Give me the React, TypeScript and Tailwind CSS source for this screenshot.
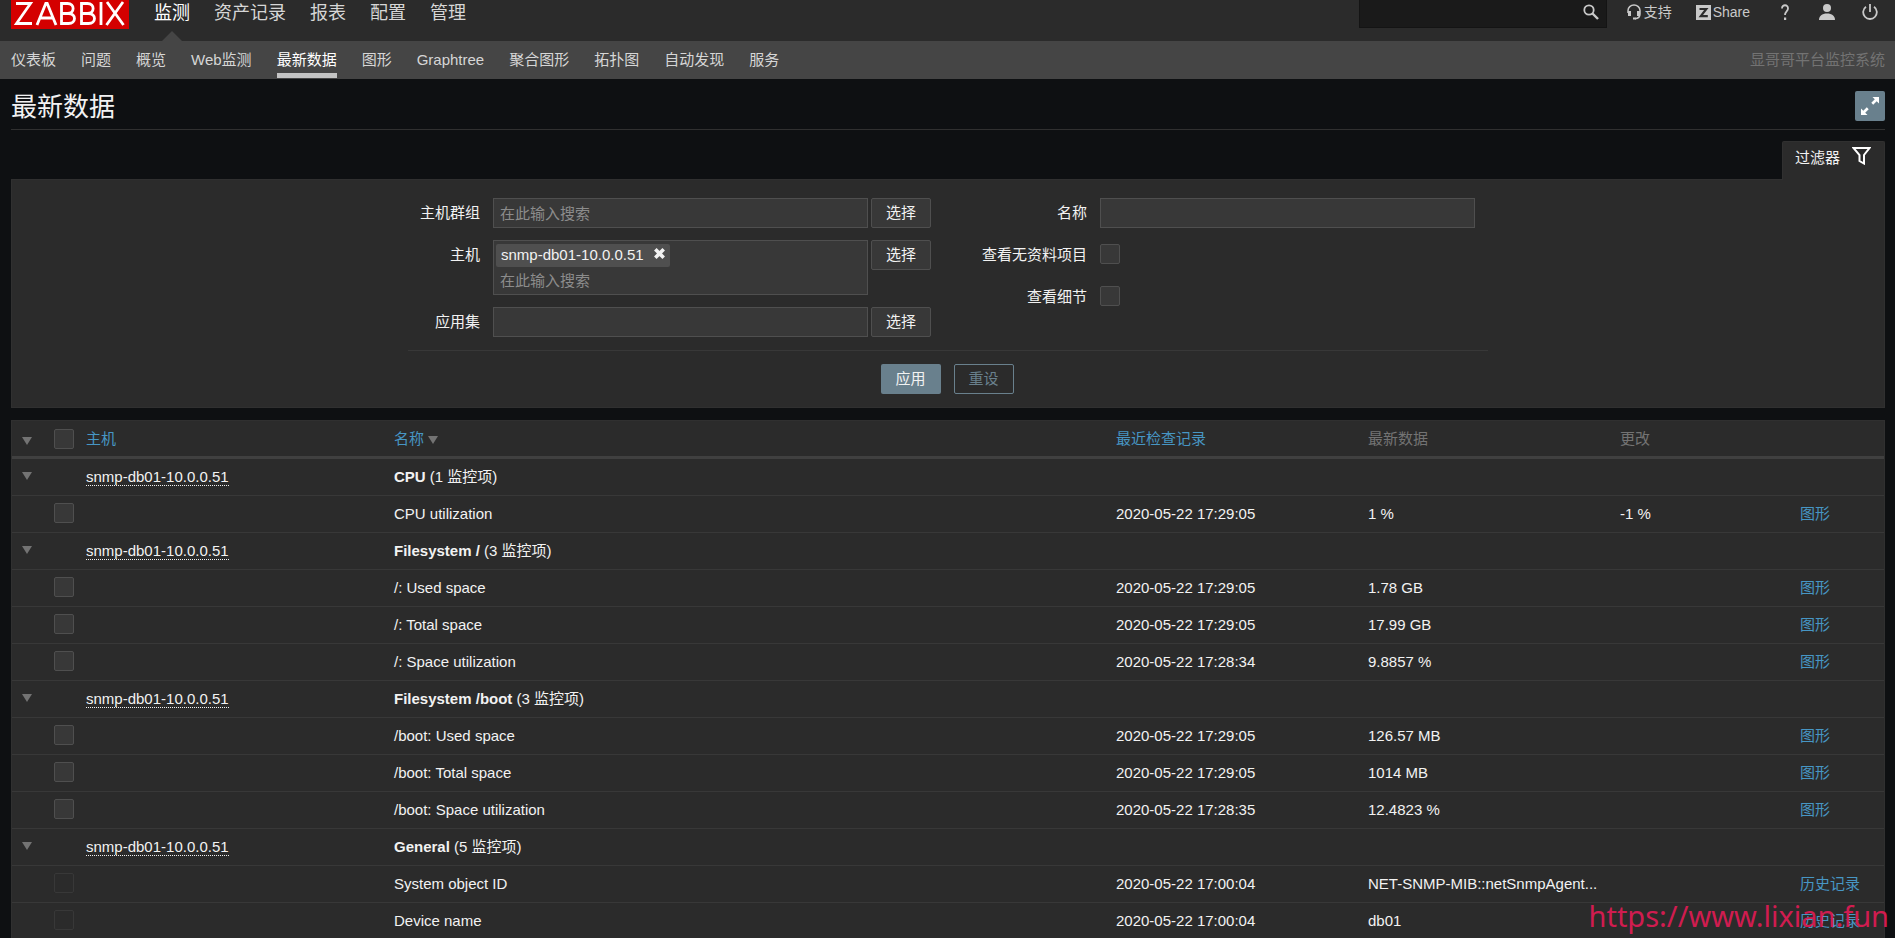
import React from 'react';

const mainMenu = ['监测', '资产记录', '报表', '配置', '管理'];

const subMenu = [
  '仪表板',
  '问题',
  '概览',
  'Web监测',
  '最新数据',
  '图形',
  'Graphtree',
  '聚合图形',
  '拓扑图',
  '自动发现',
  '服务',
];

const HOST = 'snmp-db01-10.0.0.51';

type Item = {
  name: string;
  lastCheck: string;
  value: string;
  change?: string;
  link: string;
  disabled?: boolean;
};

type Group = { name: string; count: number; items: Item[] };

const groups: Group[] = [
  {
    name: 'CPU',
    count: 1,
    items: [
      { name: 'CPU utilization', lastCheck: '2020-05-22 17:29:05', value: '1 %', change: '-1 %', link: '图形' },
    ],
  },
  {
    name: 'Filesystem /',
    count: 3,
    items: [
      { name: '/: Used space', lastCheck: '2020-05-22 17:29:05', value: '1.78 GB', link: '图形' },
      { name: '/: Total space', lastCheck: '2020-05-22 17:29:05', value: '17.99 GB', link: '图形' },
      { name: '/: Space utilization', lastCheck: '2020-05-22 17:28:34', value: '9.8857 %', link: '图形' },
    ],
  },
  {
    name: 'Filesystem /boot',
    count: 3,
    items: [
      { name: '/boot: Used space', lastCheck: '2020-05-22 17:29:05', value: '126.57 MB', link: '图形' },
      { name: '/boot: Total space', lastCheck: '2020-05-22 17:29:05', value: '1014 MB', link: '图形' },
      { name: '/boot: Space utilization', lastCheck: '2020-05-22 17:28:35', value: '12.4823 %', link: '图形' },
    ],
  },
  {
    name: 'General',
    count: 5,
    items: [
      {
        name: 'System object ID',
        lastCheck: '2020-05-22 17:00:04',
        value: 'NET-SNMP-MIB::netSnmpAgent...',
        link: '历史记录',
        disabled: true,
      },
      { name: 'Device name', lastCheck: '2020-05-22 17:00:04', value: 'db01', link: '历史记录', disabled: true },
    ],
  },
];

function Arrow() {
  return (
    <svg width="10" height="8" viewBox="0 0 10 8" className="inline-block fill-[#737373]">
      <path d="M0 0h10L5 8z" />
    </svg>
  );
}

function Checkbox(props: React.InputHTMLAttributes<HTMLInputElement>) {
  return (
    <input
      type="checkbox"
      className="block size-5 appearance-none rounded-xs border border-[#4f4f4f] bg-[#383838] disabled:border-[#383838] disabled:bg-[#2b2b2b]"
      {...props}
    />
  );
}

function SelectButton() {
  return (
    <button type="button" className="h-[30px] w-[60px] shrink-0 rounded-xs border border-[#4f4f4f] bg-[#383838]">
      选择
    </button>
  );
}

function Header() {
  return (
    <header className="flex h-[41px] items-start justify-between bg-[#2b2b2b] pr-2.5 pl-[11px]">
      <div className="flex items-start">
        <a href="#" aria-label="ZABBIX" className="mr-[25px] block h-[29px] w-[118px] overflow-hidden bg-[#d40000]">
          <svg width="118" height="29" viewBox="0 0 118 29" fill="none" stroke="#fff" strokeWidth="2.800">
            <path d="M5 3.500h14.500L5.500 23.500h15.500" />
            <path d="M26 25 34.800 3.500h1.400L45 25M29 18h13" />
            <path d="M50.500 3.500v20h7c8 0 8-10 0-10h-7 6c7.500 0 7.500-10 0-10z" />
            <path d="M70.500 3.500v20h7c8 0 8-10 0-10h-7 6c7.500 0 7.500-10 0-10z" />
            <path d="M90 2v23M96 2l16.500 23M112 2 95.500 25" />
          </svg>
        </a>
        <nav className="flex gap-6 text-lg leading-[26px] text-[#d6d6d6]">
          {mainMenu.map((item, i) => (
            <a key={item} href="#" className={i === 0 ? 'flex h-[41px] flex-col items-center justify-between text-white' : ''}>
              {item}
              {i === 0 && (
                <svg width="20" height="10" viewBox="0 0 20 10" className="fill-[#454545]">
                  <path d="M10 0l10 10H0z" />
                </svg>
              )}
            </a>
          ))}
        </nav>
      </div>

      <div className="flex items-start text-[#c9c9c9]">
        <form className="flex h-7 w-[248px] items-start border border-t-0 border-[#141414] bg-[#1a1a1a]">
          <input type="text" aria-label="搜索" className="h-full min-w-0 flex-1 bg-transparent px-2 outline-none" />
          <button type="submit" aria-label="搜索" className="mt-1 mr-[7px]">
            <svg width="16" height="16" viewBox="0 0 16 16" fill="none" stroke="currentColor">
              <circle cx="6" cy="6" r="4.700" strokeWidth="1.800" />
              <path d="M9.500 9.500l5.500 5.500" strokeWidth="2.400" />
            </svg>
          </button>
        </form>
        <a href="#" className="ml-5 flex h-6 items-center gap-[3px] text-sm">
          <svg width="14" height="16" viewBox="0 0 14 16" fill="none" stroke="currentColor">
            <path d="M1 9V6.500a6 5.500 0 0 1 12 0V10c0 3-2 4.500-5 4.700" strokeWidth="1.500" />
            <path d="M2.500 7v5M11.500 7v5" strokeWidth="3" />
            <path d="M6 14.500h3" strokeWidth="2" />
          </svg>
          支持
        </a>
        <a href="#" className="ml-6 flex h-6 items-center gap-[2px] text-sm">
          <svg width="15" height="15" viewBox="0 0 15 15">
            <path d="M0 0h15v15H0z" fill="currentColor" />
            <path d="M3.500 4h6.800L4.800 11.200h7" fill="none" stroke="#2b2b2b" strokeWidth="2.200" />
          </svg>
          Share
        </a>
        <a href="#" aria-label="帮助" className="ml-[31px] flex h-6 items-center">
          <svg width="8" height="16" viewBox="0 0 8 16" fill="none" stroke="currentColor">
            <path d="M1 4.500C1 0 7.200.300 7 4.500 6.900 7.300 4 7.500 4 11" strokeWidth="1.800" />
            <path d="M3 13.500h2.200V16H3z" fill="currentColor" stroke="none" />
          </svg>
        </a>
        <a href="#" aria-label="用户" className="ml-[30px] flex h-6 items-center">
          <svg width="16" height="16" viewBox="0 0 16 16" fill="currentColor">
            <circle cx="8" cy="4" r="4" />
            <path d="M0 16c0-4 3-6.500 8-6.500s8 2.500 8 6.500z" />
          </svg>
        </a>
        <a href="#" aria-label="退出" className="mr-[7px] ml-[27px] flex h-6 items-center">
          <svg width="16" height="16" viewBox="0 0 16 16" fill="none" stroke="currentColor" strokeWidth="1.800">
            <path d="M8 0v8M4 2.700a6.800 6.800 0 1 0 8 0" />
          </svg>
        </a>
      </div>
    </header>
  );
}

function SubNav() {
  return (
    <div className="flex h-[38px] justify-between bg-[#454545] pr-2.5 pl-[11px]">
      <nav className="flex gap-[25px] text-[#d6d6d6]">
        {subMenu.map((item) => (
          <a
            key={item}
            href="#"
            className={
              item === '最新数据' ? 'mb-px border-b-[5px] border-[#c4c4c4] leading-[37px] text-white' : 'leading-[37px]'
            }
          >
            {item}
          </a>
        ))}
      </nav>
      <span className="leading-[37px] text-[#737373]">显哥哥平台监控系统</span>
    </div>
  );
}

function Filter() {
  return (
    <section className="mt-[11px]">
      <div className="flex justify-end">
        <a
          href="#"
          className="-mb-px flex h-[39px] w-[103px] items-start rounded-t-xs border border-b-0 border-[#303030] bg-[#2b2b2b] pt-1 pl-3"
        >
          <span className="leading-6">过滤器</span>
          <svg width="19" height="18" viewBox="0 0 19 18" className="mt-px ml-3" fill="none" stroke="#fff" strokeWidth="2">
            <path d="M1.500 1h16L12 8v8.500L7.500 14V8z" />
          </svg>
        </a>
      </div>
      <form className="border border-[#303030] bg-[#2b2b2b] pt-[18px] pb-[13px]">
        <div className="mx-auto flex w-[1080px] border-b border-[#383838] pb-[13px]">
          <div className="flex w-[540px] flex-col gap-3">
            <div className="flex">
              <label htmlFor="groups" className="w-[73px] pr-px text-right leading-[29px]">
                主机群组
              </label>
              <input
                id="groups"
                type="text"
                placeholder="在此输入搜索"
                className="mr-[3px] ml-3 h-[30px] w-[375px] border border-[#4f4f4f] bg-[#383838] px-1.5 placeholder:text-[#8c8c8c]"
              />
              <SelectButton />
            </div>
            <div className="flex">
              <label htmlFor="hosts" className="w-[73px] pr-px text-right leading-[29px]">
                主机
              </label>
              <div className="mr-[3px] ml-3 w-[375px] border border-[#4f4f4f] bg-[#383838] px-0.5 pt-[3px]">
                <div className="flex h-[23px] w-[174px] items-center justify-between rounded-xs bg-[#4f4f4f] px-[5px] leading-5">
                  <span className="mb-0.5">{HOST}</span>
                  <button type="button" aria-label="移除">
                    <svg width="11" height="11" viewBox="0 0 11 11" className="mb-1" stroke="currentColor" strokeWidth="3.600">
                      <path d="M1.300 1.300l8.400 8.400M9.700 1.300L1.300 9.700" />
                    </svg>
                  </button>
                </div>
                <input
                  id="hosts"
                  type="text"
                  placeholder="在此输入搜索"
                  className="block h-[27px] w-full bg-transparent px-1 placeholder:text-[#8c8c8c]"
                />
              </div>
              <SelectButton />
            </div>
            <div className="flex">
              <label htmlFor="application" className="w-[73px] pr-px text-right leading-[29px]">
                应用集
              </label>
              <input
                id="application"
                type="text"
                className="mr-[3px] ml-3 h-[30px] w-[375px] border border-[#4f4f4f] bg-[#383838] px-1.5"
              />
              <SelectButton />
            </div>
          </div>

          <div className="flex w-[540px] flex-col gap-3">
            <div className="flex">
              <label htmlFor="name" className="w-[139px] text-right leading-[29px]">
                名称
              </label>
              <input
                id="name"
                type="text"
                className="ml-[13px] h-[30px] w-[375px] border border-[#4f4f4f] bg-[#383838] px-1.5"
              />
            </div>
            <div className="flex h-[30px] items-start gap-[13px]">
              <label htmlFor="without-data" className="w-[139px] text-right leading-[29px]">
                查看无资料项目
              </label>
              <div className="pt-1">
                <Checkbox id="without-data" />
              </div>
            </div>
            <div className="flex h-[30px] items-start gap-[13px]">
              <label htmlFor="details" className="w-[139px] text-right leading-[29px]">
                查看细节
              </label>
              <div className="pt-1">
                <Checkbox id="details" />
              </div>
            </div>
          </div>
        </div>
        <div className="mt-[13px] flex justify-center gap-[13px] pr-0.5">
          <button type="submit" className="h-[30px] w-[60px] rounded-xs bg-[#69808d]">
            应用
          </button>
          <button type="reset" className="h-[30px] w-[60px] rounded-xs border border-[#69808d] text-[#69808d]">
            重设
          </button>
        </div>
      </form>
    </section>
  );
}

function DataTable() {
  return (
    <table className="mt-3 w-full table-fixed border-separate border-spacing-0 border border-[#303030] bg-[#2b2b2b] text-left">
      <colgroup>
        <col className="w-[37px]" />
        <col className="w-8" />
        <col className="w-[308px]" />
        <col />
        <col className="w-[252px]" />
        <col className="w-[252px]" />
        <col className="w-[180px]" />
        <col className="w-[89px]" />
      </colgroup>
      <thead>
        <tr className="h-[38px] text-[#737373] *:border-b-3 *:border-[#404040] *:px-[5px] *:font-normal">
          <th>
            <button type="button" aria-label="展开全部" className="block pt-0.5 pl-[5px]">
              <Arrow />
            </button>
          </th>
          <th>
            <Checkbox aria-label="全选" />
          </th>
          <th>
            <a href="#" className="text-[#4796c4]">主机</a>
          </th>
          <th>
            <a href="#" className="text-[#4796c4]">
              名称 <Arrow />
            </a>
          </th>
          <th>
            <a href="#" className="text-[#4796c4]">最近检查记录</a>
          </th>
          <th>最新数据</th>
          <th>更改</th>
          <th />
        </tr>
      </thead>
      <tbody>
        {groups.map((group) => (
          <React.Fragment key={group.name}>
            <tr className="h-[37px] *:border-b *:border-[#383838] *:px-[5px]">
              <td>
                <button type="button" aria-label="折叠" className="block pb-1 pl-[5px]">
                  <Arrow />
                </button>
              </td>
              <td />
              <td>
                <a href="#" className="border-b border-dotted border-[#f2f2f2]">{HOST}</a>
              </td>
              <td colSpan={5}>
                <b>{group.name}</b> ({group.count} 监控项)
              </td>
            </tr>
            {group.items.map((item) => (
              <tr key={item.name} className="h-[37px] *:border-b *:border-[#383838] *:px-[5px]">
                <td />
                <td className="pb-0.5">
                  <Checkbox aria-label={item.name} disabled={item.disabled} />
                </td>
                <td />
                <td>{item.name}</td>
                <td>{item.lastCheck}</td>
                <td>{item.value}</td>
                <td>{item.change}</td>
                <td className="whitespace-nowrap">
                  <a href="#" className="text-[#4796c4]">{item.link}</a>
                </td>
              </tr>
            ))}
          </React.Fragment>
        ))}
      </tbody>
    </table>
  );
}

export default function App() {
  return (
    <div className="relative h-screen overflow-hidden bg-[#0e1012] font-['Liberation_Sans','Noto_Sans_CJK_SC',sans-serif] text-[15px] leading-5 text-[#f2f2f2]">
      <Header />
      <SubNav />
      <main className="pr-2.5 pl-[11px]">
        <div className="flex h-[51px] items-center justify-between border-b border-[#303030] pt-1">
          <h1 className="pt-0.5 text-[26px] leading-8">最新数据</h1>
          <button
            type="button"
            aria-label="全屏"
            className="flex size-[30px] items-center justify-center rounded-xs bg-[#69808d]"
          >
            <svg width="20" height="20" viewBox="0 0 20 20" fill="#fff">
              <path d="M12.500 1h6.500v6.500l-2.300-2.300-3.500 3.500-1.900-1.900 3.500-3.500zM7.500 19H1v-6.500l2.300 2.300 3.500-3.500 1.900 1.900-3.500 3.500z" />
            </svg>
          </button>
        </div>
        <Filter />
        <DataTable />
      </main>
      <div className="pointer-events-none absolute right-1.5 bottom-1 font-['Noto_Sans',sans-serif] text-[29px] leading-9 text-[#d01c50]">
        https://www.lixian.fun
      </div>
    </div>
  );
}
